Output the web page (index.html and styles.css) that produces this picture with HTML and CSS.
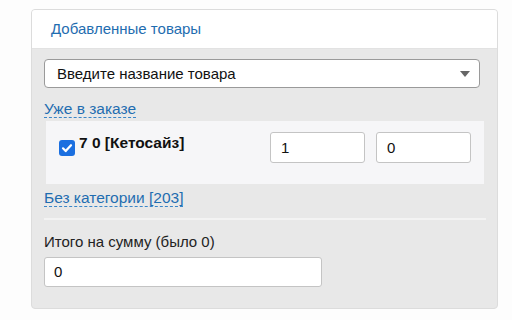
FILE: index.html
```html
<!DOCTYPE html>
<html lang="ru">
<head>
<meta charset="utf-8">
<link rel="stylesheet" href="styles.css">
</head>
<body>
<div class="panel">
  <div class="header">Добавленные товары</div>
  <div class="body">
    <div class="select">
      <span class="select-text">Введите название товара</span>
      <span class="caret"></span>
    </div>
    <div class="link-row first"><span class="dlink">Уже в заказе</span></div>
    <div class="items">
      <div class="item">
        <span class="check"><svg width="16" height="16" viewBox="0 0 16 16"><path d="M4 8.3l2.7 2.8L12 5.2" fill="none" stroke="#fff" stroke-width="2.2" stroke-linecap="round" stroke-linejoin="round"/></svg></span>
        <span class="item-name">7 0 [Кетосайз]</span>
        <span class="spacer"></span>
        <div class="field small">1</div>
        <div class="field small">0</div>
      </div>
    </div>
    <div class="link-row second"><span class="dlink">Без категории [203]</span></div>
    <div class="sep"></div>
    <div class="total-label">Итого на сумму (было 0)</div>
    <div class="field total">0</div>
  </div>
</div>
</body>
</html>
```
FILE: styles.css
```css
html, body {
  margin: 0;
  padding: 0;
  background: #fdfdfd;
  font-family: "Liberation Sans", Arial, sans-serif;
  color: #222;
}
.panel {
  margin: 9px 0 0 31px;
  width: 465px;
  height: 298px;
  border: 1px solid #dcdcdc;
  border-radius: 4px;
  background: #e8e8e8;
  overflow: hidden;
}
.header {
  height: 38px;
  background: #fff;
  border-bottom: 1px solid #e2e2e2;
  padding-left: 19px;
  font-size: 15px;
  line-height: 38px;
  color: #1f6db0;
}
.body {
  padding: 10px 0 0 12px;
}
.select {
  width: 434px;
  height: 27px;
  border: 1px solid #9a9a9a;
  border-radius: 4px;
  background: #fff;
  display: flex;
  align-items: center;
}
.select-text {
  flex: 1;
  padding-left: 12px;
  font-size: 15px;
  color: #111;
}
.caret {
  width: 0;
  height: 0;
  border-left: 5px solid transparent;
  border-right: 5px solid transparent;
  border-top: 6px solid #666;
  margin-right: 9px;
  margin-top: 1px;
}
.link-row {
  font-size: 15.5px;
  line-height: 17px;
  height: 17px;
}
.link-row.first { margin-top: 12px; }
.link-row.second { margin-top: 5px; }
.dlink {
  color: #1f6db0;
  border-bottom: 1px dashed #3a86c8;
}
.items {
  margin: 4px 0 0 2px;
  width: 438px;
  height: 63px;
  background: #f6f6f8;
  box-sizing: border-box;
  padding: 11px 13px 0 13px;
}
.item {
  display: flex;
  align-items: flex-start;
}
.check {
  width: 16px;
  height: 16px;
  border-radius: 3px;
  background: #1b6fe0;
  margin-top: 8px;
  display: block;
}
.check svg { display: block; }
.item-name {
  margin-left: 4px;
  margin-top: 2px;
  font-size: 15.5px;
  font-weight: bold;
  line-height: 18px;
  color: #111;
}
.spacer { flex: 1; }
.field {
  box-sizing: border-box;
  border: 1px solid #c4c4c4;
  border-radius: 3px;
  background: #fff;
  font-size: 15px;
  color: #111;
  padding-left: 10px;
}
.field.small {
  width: 95px;
  height: 31px;
  line-height: 29px;
  margin-left: 11px;
}
.sep {
  margin-top: 12px;
  width: 442px;
  height: 2px;
  background: #f3f3f3;
}
.total-label {
  margin-top: 14px;
  font-size: 15px;
  line-height: 16px;
  color: #222;
}
.field.total {
  margin-top: 7px;
  width: 278px;
  height: 30px;
  line-height: 28px;
  padding-left: 9px;
}
```
